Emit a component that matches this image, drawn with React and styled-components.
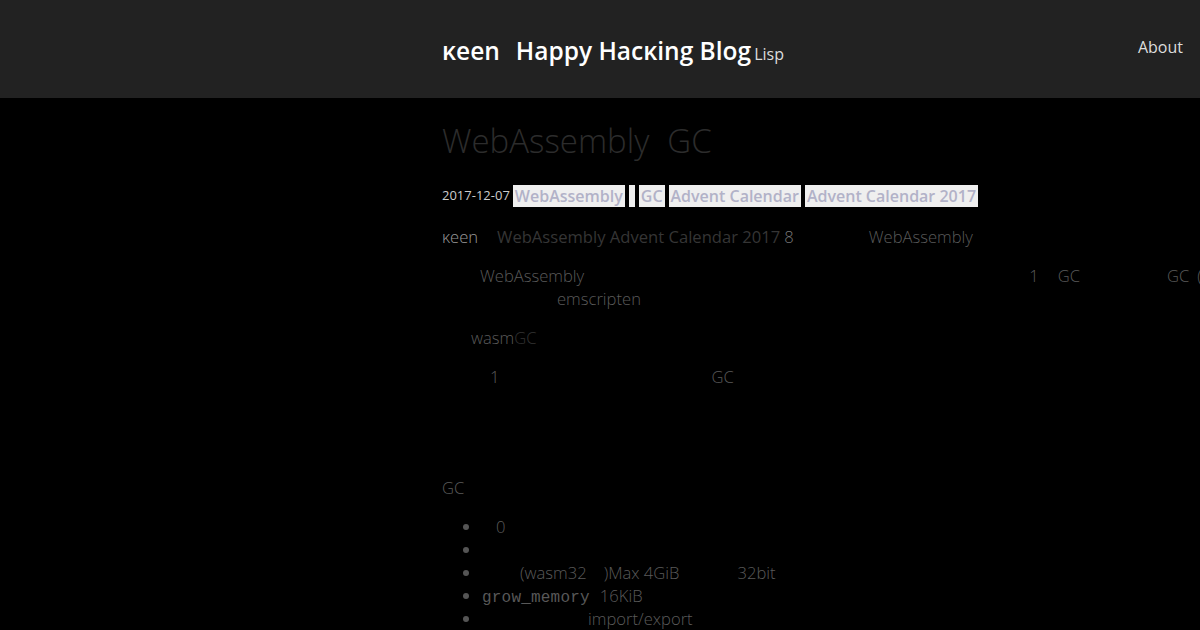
import React from 'react'
import styled, { createGlobalStyle } from 'styled-components'

// -- GLOBAL -- //
const GlobalStyle = createGlobalStyle`
    html, body {
        margin: 0;
        padding: 0;
        background: #000;
        overflow: hidden;
    }
    body {
        font-family: "Open Sans", "Noto Sans", sans-serif;
    }
`;

// -- STYLED COMPONENTS -- //
const Header = styled.header`
    display: flex;
    align-items: center;
    justify-content: space-between;
    height: 98px;
    padding: 0 17px 0 442px;
    background: #222;
`;
const Brand = styled.div`
    display: flex;
    align-items: baseline;
    color: #fff;
    font-size: 24.5px;
    font-weight: 600;
    padding-top: 2px;
`;
const BrandSub = styled.span`
    font-size: 16px;
    font-weight: 400;
    color: #ddd;
    margin-left: 3px;
`;
const NavLink = styled.a`
    color: #ddd;
    font-size: 16px;
    text-decoration: none;
    margin-bottom: 4px;
`;
const Main = styled.main`
    padding: 18px 0 0 442px;
    width: 1000px;
    color: #5a5a5a;
    font-size: 16.6px;
    font-weight: 300;
    line-height: 23px;
    white-space: nowrap;
`;
const Title = styled.h1`
    margin: 0;
    font-size: 33px;
    line-height: 50px;
    font-weight: 300;
    color: #2c2c2c;
`;
const Meta = styled.div`
    display: flex;
    align-items: flex-start;
    gap: 4px;
    margin-top: 19px;
`;
const Date = styled.span`
    font-size: 13px;
    line-height: 18px;
    color: #ccc;
    font-weight: 400;
    padding-top: 1px;
    margin-right: -1px;
`;
const Tag = styled.a`
    display: inline-block;
    min-width: 6px;
    height: 22px;
    padding: 0 2px;
    background: #efefef;
    color: #b2b2c8;
    font-size: 16px;
    font-weight: 600;
    line-height: 23px;
    text-decoration: none;
    box-sizing: border-box;
`;
const Para = styled.p`
    margin: ${p => p.top ?? 16}px 0 0;
    min-height: ${p => p.lines ? p.lines * 23 : 0}px;
`;
const Line = styled.span`
    display: block;
`;
const Gap = styled.span`
    display: inline-block;
    width: ${p => p.w}px;
`;
const Frag = styled.span`
    color: ${p => p.color || 'inherit'};
`;
const Link = styled.a`
    color: #353535;
    text-decoration: none;
    font-weight: 400;
`;
const List = styled.ul`
    margin: 16px 0 0;
    padding-left: 40px;
    li {
        height: 23px;
    }
    li::marker {
        color: #555;
    }
`;
const Code = styled.code`
    font-family: "Liberation Mono", "DejaVu Sans Mono", monospace;
    font-size: 16px;
    line-height: 1;
    color: #585858;
    letter-spacing: 0.2px;
`;

// -- COMPONENT TO EXPORT -- //
function App() {
    return (
        <>
            <GlobalStyle />
            <Header>
                <Brand>
                    ĸeen<Gap w={16} />Happy Hacĸing Blog
                    <BrandSub>Lisp</BrandSub>
                </Brand>
                <NavLink href="#">About</NavLink>
            </Header>
            <Main>
                <Title>WebAssembly<Gap w={18} />GC</Title>
                <Meta>
                    <Date>2017-12-07</Date>
                    <Tag href="#">WebAssembly</Tag>
                    <Tag href="#"></Tag>
                    <Tag href="#">GC</Tag>
                    <Tag href="#">Advent Calendar</Tag>
                    <Tag href="#">Advent Calendar 2017</Tag>
                </Meta>
                <Para top={18}>
                    <Frag color="#9a9a9a">ĸeen</Frag><Gap w={19} />
                    <Link href="#">WebAssembly Advent Calendar 2017</Link>
                    <Gap w={4} /><Frag color="#777">8</Frag><Gap w={75} />
                    <Frag>WebAssembly</Frag>
                </Para>
                <Para>
                    <Line>
                        <Gap w={38} />WebAssembly<Gap w={445} />1<Gap w={19} />GC<Gap w={87} />GC<Gap w={8} />(
                    </Line>
                    <Line><Gap w={115} />emscripten</Line>
                </Para>
                <Para>
                    <Gap w={29} />wasm<Frag color="#333">GC</Frag>
                </Para>
                <Para>
                    <Gap w={48} />1<Gap w={212} />GC
                </Para>
                <Para lines={2} top={16} />
                <Para top={26}>GC</Para>
                <List>
                    <li><Gap w={14} />0</li>
                    <li>&nbsp;</li>
                    <li><Gap w={38} />(wasm32<Gap w={17} />)Max 4GiB<Gap w={58} />32bit</li>
                    <li><Code>grow_memory</Code><Gap w={10} />16KiB</li>
                    <li><Gap w={106} />import/export</li>
                </List>
            </Main>
        </>
    )
}

// -- EXPORTS -- //
export default App
